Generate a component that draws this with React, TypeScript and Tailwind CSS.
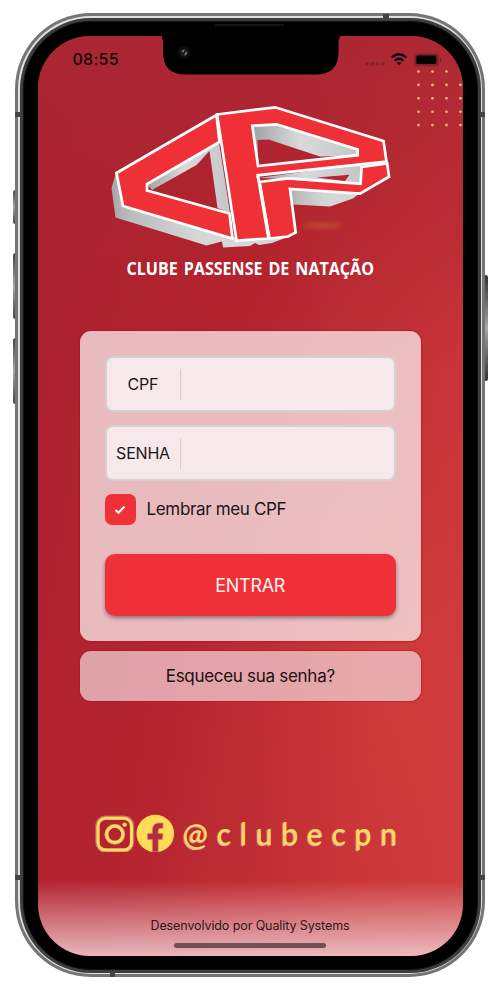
import React from "react";

const dots = Array.from({ length: 20 }, (_, i) => ({
  x: 1.5 + (i % 4) * 14,
  y: 1.5 + Math.floor(i / 4) * 13.4,
})).filter((d) => !(d.x > 40 && d.y < 5));

function Logo() {
  return (
    <svg className="block h-[186px] w-[290px]" viewBox="105 100 290 186" role="img">
      <defs>
        <linearGradient id="side" x1="0" y1="0" x2="1" y2="0">
          <stop offset="0" stopColor="#a5a7a9" />
          <stop offset=".1" stopColor="#b9bbbd" />
          <stop offset=".5" stopColor="#d5d6d8" />
          <stop offset="1" stopColor="#d5d6d8" />
        </linearGradient>
        <linearGradient id="bevel" x1="0" y1="0" x2="1" y2="0">
          <stop offset="0" stopColor="#9fa1a3" />
          <stop offset=".45" stopColor="#d9dadb" />
          <stop offset="1" stopColor="#c4c6c8" />
        </linearGradient>
        <filter id="soft" x="-20%" y="-100%" width="140%" height="300%">
          <feGaussianBlur stdDeviation="2" />
        </filter>
      </defs>
      <ellipse cx="322" cy="225.500" rx="20" ry="2.500" fill="#c8662f" opacity=".6" filter="url(#soft)" />
      <g fill="url(#side)">
        <path d="M116 173L111.500 188L115.500 217.500L206.500 245.500L222 241.500L223 247.500L250 246L255 243L259 245L272 243L285 238L232 237L123 205Z" />
        <path d="M290 188L360 193L353 198.500L330 206.500L293 204.500Z" />
      </g>
      <g fill="url(#bevel)">
        <path d="M147 184L219 142L230 213L217.500 208L209.500 151L196.500 165L152 190Z" />
        <path d="M252 125L277 124L358 150V156L320 156.500L268.500 139.500L257.500 140L258.500 165Z" />
        <path fillRule="evenodd" d="M258 178L361 164L361 184L288 179ZM316.500 177.500L349.500 174.800L345 181Z" />
      </g>
      <g fill="#ef3037" stroke="#fff" strokeWidth="2.700" strokeLinejoin="miter">
        <path d="M116.500 173L216.500 115L219.500 142L147 184V190.500L229.500 213.500L232.500 238.500L123 206Z" />
        <path
          fillRule="evenodd"
          d="M217 114.500L275 107.300L383.500 141L386.500 161.500L257.700 175.300L268.500 238.500L236.500 240.500ZM252.300 125.700L258 166L357.700 155.200V149.500L276.700 124.300Z"
        />
        <path d="M259.500 182L288 178.300L360.500 183.800L361.700 167L387.200 163.500L389 176.700L360 193.700L290 189L295.700 232.500L288 236.500L269.500 238.500Z" />
        <path d="M257.500 176L259.500 182L269 238.500" fill="none" />
      </g>
      <text
        x="126.500"
        y="274.800"
        textLength="247.500"
        lengthAdjust="spacingAndGlyphs"
        fill="#fff"
        fontSize="18"
        fontWeight="700"
        wordSpacing="2"
        fontFamily="'Open Sans', sans-serif"
      >
        CLUBE PASSENSE DE NATAÇÃO
      </text>
    </svg>
  );
}

function StatusIcons() {
  return (
    <svg className="h-[16px] w-[78px]" viewBox="364 50 78 16">
      <g fill="#861f29">
        {[367, 372.4, 377.600, 382.800].map((x) => (
          <circle key={x} cx={x} cy="62.700" r="1.700" />
        ))}
      </g>
      <g fill="none" stroke="#12070a" strokeWidth="2.300">
        <path d="M391.800 56.300Q399 50.300 406.300 56.300M394.600 59.600Q399 55.800 403.500 59.600" />
      </g>
      <path d="M396.600 61.800Q399 60 401.500 61.800L399 64.500Z" fill="#12070a" />
      <rect x="414.700" y="53" width="24" height="11.800" rx="3" fill="#86202a" stroke="#86202a" />
      <rect x="416.300" y="54.600" width="20" height="8.300" rx="1.500" fill="#050202" />
      <path d="M440.200 57.200v3.500q1.600-1.700 0-3.500" fill="#4d151c" />
    </svg>
  );
}

function Field({ label }: { label: string }) {
  return (
    <div className="flex h-[56px] items-center rounded-[8px] border-2 border-[#d4d1d4] bg-[#f7e9ea]">
      <span className="w-[73px] text-center text-[16px] leading-none tracking-[-0.2px] text-[#1b1718]">{label}</span>
      <span className="h-[31px] w-[1.5px] bg-[#dfc9cc]" />
    </div>
  );
}

function Social() {
  return (
    <div className="flex h-[40px] items-center text-[#ffdc58]">
      <svg className="h-[38px] w-[82px] shrink-0" viewBox="95 813 82 38">
        <rect x="97.500" y="816.700" width="34.500" height="32.800" rx="8" fill="none" stroke="#d893a0" strokeWidth="4.500" opacity=".65" />
        <rect x="98" y="817.300" width="33.500" height="31.800" rx="7.500" fill="none" stroke="#ffdc58" strokeWidth="3" />
        <circle cx="114.800" cy="833.300" r="8.500" fill="none" stroke="#cf8290" strokeWidth="4" />
        <circle cx="114.800" cy="833.300" r="8.100" fill="none" stroke="#ffdc58" strokeWidth="3.200" />
        <circle cx="124.700" cy="823.600" r="2.200" fill="#ffdc58" />
        <circle cx="155.300" cy="832.500" r="18.800" fill="#ffdc58" />
        <path
          d="M152.300 851V838.500H147.500V832.500H152.300V829.500C152.300 824.500 155 822 159.500 822H163V827.300H160.500C158.800 827.300 158.200 828.300 158.200 830V832.500H163L162.300 838.500H158.200V851Z"
          fill="#b82b3c"
          stroke="#cf8a68"
          strokeWidth=".8"
        />
      </svg>
      <span className="ml-[6.500px] font-['Lato',sans-serif] text-[30px] leading-none tracking-[8.8px] [text-shadow:-1px_1px_1px_#f3c6c4]">
        @clubecpn
      </span>
    </div>
  );
}

export default function App() {
  return (
    <main className="relative h-[990px] w-[498px] overflow-hidden bg-white font-['Inter',sans-serif]">
      {/* hardware buttons behind the frame */}
      <i className="absolute left-[12.500px] top-[190px] h-[34px] w-[5px] rounded-sm bg-linear-to-b from-[#444] via-[#aaa8a5] to-[#444]" />
      <i className="absolute left-[12.500px] top-[253px] h-[66px] w-[5px] rounded-sm bg-linear-to-b from-[#444] via-[#aaa8a5] to-[#444]" />
      <i className="absolute left-[12.500px] top-[338px] h-[66px] w-[5px] rounded-sm bg-linear-to-b from-[#444] via-[#aaa8a5] to-[#444]" />
      <i className="absolute left-[483px] top-[275px] h-[106px] w-[5px] rounded-sm bg-linear-to-b from-[#333] via-[#aaa8a5] to-[#333]" />

      <div className="relative ml-[15px] mt-[13px] h-[964px] w-[470px] rounded-[76px] bg-[#777473] p-[3px]">
        <div className="h-full rounded-[73px] bg-[#e0e0e0] p-[1.500px]">
          <div className="h-full rounded-[71px] bg-[#3b3e3d] p-[3px]">
            <div className="h-full rounded-[68px] border border-[#101111] bg-black px-[14px] pb-[12.500px] pt-[14.500px]">
              <div className="relative flex h-full flex-col overflow-hidden rounded-[52px] bg-[radial-gradient(circle_at_25%_3%,#c0394440,transparent_12%),radial-gradient(ellipse_at_50%_17%,#b91e2b70,transparent_30%),radial-gradient(ellipse_at_85%_70%,#d8433c60,transparent_30%),linear-gradient(100deg,#a9202e_0%,#b5242f_40%,#c93538_80%,#cd3b3c_100%)]">
                <div className="absolute inset-x-0 top-0 h-[340px] bg-linear-to-b from-[#a92733cc] via-[#ab242f80] to-transparent" />
                <div className="absolute inset-x-0 bottom-0 h-[76px] bg-linear-to-b from-[#f1d8db00] via-[#efd0d470] to-[#f1d0d4d9]" />
                <svg className="absolute left-[124px] top-0 h-[39px] w-[178px]" viewBox="0 0 178 39">
                  <path d="M-5 0Q1 0 1 6V16Q1 38.500 23 38.500H154Q176.500 38.500 176.500 16V6Q176.500 0 182 0Z" />
                  <circle cx="22" cy="16.500" r="6.500" fill="#0d0d0e" />
                  <circle cx="22" cy="16.500" r="3.800" fill="#1c1d1f" />
                  <path d="M20.200 14.500l2.500-.8-1.800 3ZM24.200 15.500l.8 2-3 2.200Z" fill="#9fa3a5" />
                </svg>
                <svg className="absolute right-0 top-[34px] h-[60px] w-[45.500px]" viewBox="0 0 45.500 60">
                  {dots.map((d) => (
                    <circle key={d.x + "-" + d.y} cx={d.x} cy={d.y} r="1.300" fill="#f3bd6c" />
                  ))}
                </svg>

                <header className="relative flex h-[45px] shrink-0 items-center justify-between pl-[35px] pr-[21px]">
                  <span className="text-[16px] font-medium leading-none tracking-[0.25px] text-[#16070a]">08:55</span>
                  <StatusIcons />
                </header>

                <div className="relative ml-[67.500px] mt-[19px] h-[186px] shrink-0">
                  <Logo />
                </div>

                <form className="relative ml-[42px] mt-[45px] flex h-[310px] w-[341.500px] shrink-0 flex-col rounded-[11px] bg-[#f5dfe2cf] px-[25px] pt-[25px] shadow-[0_0_1px_1px_#b40c1480]">
                  <Field label="CPF" />
                  <div className="mt-[13px]">
                    <Field label="SENHA" />
                  </div>
                  <label className="mt-[13px] flex h-[31px] items-center">
                    <span className="flex size-[31px] items-center justify-center rounded-[7px] bg-[#ef3037]">
                      <svg className="h-[10px] w-[12px]" viewBox="0 0 12 10">
                        <path d="M1.500 5L4.400 7.800L10.500 1.600" fill="none" stroke="#fff" strokeWidth="2.100" />
                      </svg>
                    </span>
                    <span className="ml-[11px] text-[17px] tracking-[-0.34px] text-[#1b1718]">Lembrar meu CPF</span>
                  </label>
                  <button
                    type="button"
                    className="mt-[29px] h-[62px] rounded-[10px] bg-[#ef3037] text-[18px] tracking-[-0.3px] text-[#fff0f0] shadow-[0_2px_4px_#0006]"
                  >
                    ENTRAR
                  </button>
                </form>

                <button
                  type="button"
                  className="relative ml-[42px] mt-[10px] h-[50px] w-[341.500px] shrink-0 rounded-[11px] bg-[#f3d9ddb3] pt-[2px] text-[17px] tracking-[-0.29px] text-[#1b1012] shadow-[0_0_1px_1px_#b40c1460]"
                >
                  Esqueceu sua senha?
                </button>

                <div className="relative ml-[57px] mt-[112px]">
                  <Social />
                </div>

                <footer className="relative mt-auto flex flex-col items-center pb-[8px]">
                  <span className="text-[12.500px] leading-none tracking-[-0.1px] text-[#2e171b]">
                    Desenvolvido por Quality Systems
                  </span>
                  <span className="mt-[11px] h-[5px] w-[152px] rounded-full bg-[#745055]" />
                </footer>
              </div>
            </div>
          </div>
        </div>
        {/* antenna bands */}
        <i className="absolute left-0 top-[99px] h-[5px] w-[5px] bg-[#444]" />
        <i className="absolute right-0 top-[99px] h-[5px] w-[5px] bg-[#444]" />
        <i className="absolute left-0 top-[862px] h-[5px] w-[5px] bg-[#444]" />
        <i className="absolute right-0 top-[862px] h-[5px] w-[5px] bg-[#444]" />
        <i className="absolute left-[368px] top-[1px] h-[6px] w-[6px] bg-[#444]" />
        <i className="absolute bottom-0 left-[95px] h-[6px] w-[5px] bg-[#444]" />
        <i className="absolute left-[200px] top-[11px] h-[2px] w-[69px] bg-[#151515]" />
      </div>
    </main>
  );
}
